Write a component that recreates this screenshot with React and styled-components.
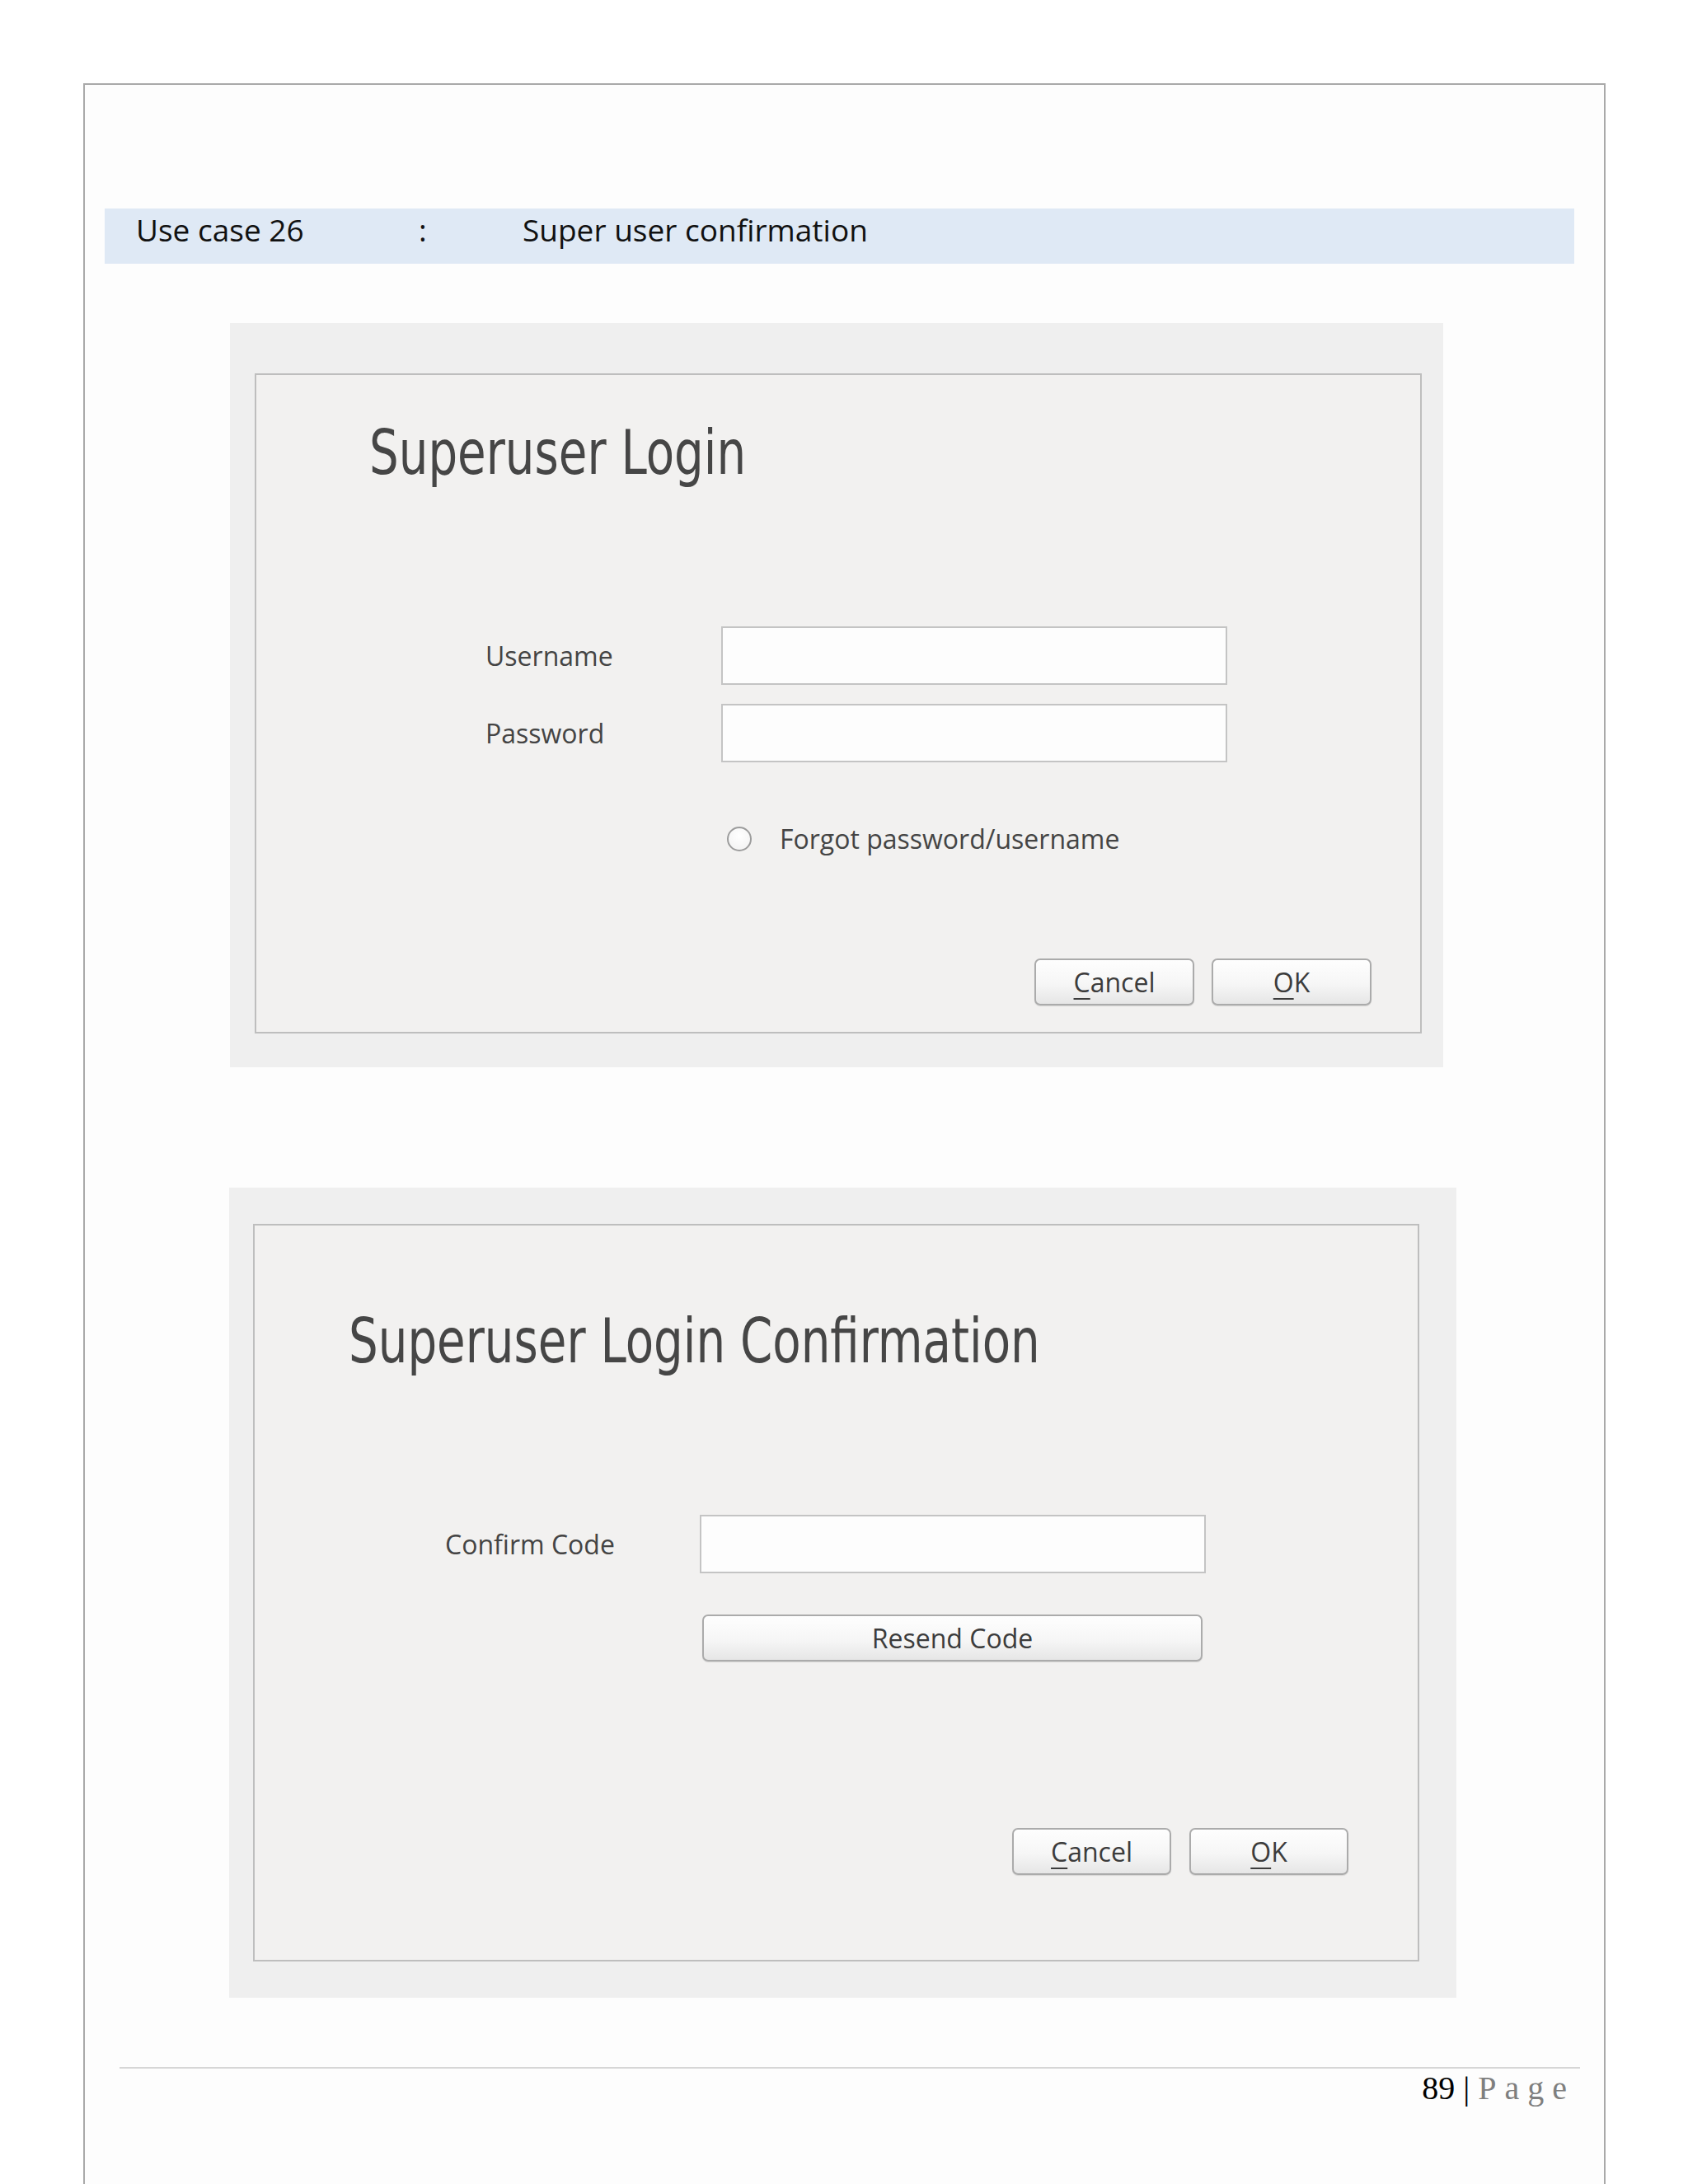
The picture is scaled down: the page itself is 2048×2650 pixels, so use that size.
import React from 'react';
import styled, { createGlobalStyle } from 'styled-components';

const GlobalStyle = createGlobalStyle`
  html, body {
    margin: 0;
    padding: 0;
    background: #fff;
  }
  body {
    height: 2650px;
    overflow: hidden;
  }
`;

const Page = styled.div`
  box-sizing: border-box;
  margin: 101px 0 0 101px;
  width: 1847px;
  height: 2549px;
  border: 2px solid #a9a9a9;
  border-bottom: none;
  background: #fdfdfd;
  display: flex;
  flex-direction: column;
`;

const CaseBand = styled.div`
  box-sizing: border-box;
  margin: 150px 0 0 24px;
  width: 1783px;
  height: 67px;
  padding-left: 38px;
  background: #dfe9f5;
  display: grid;
  grid-template-columns: 343px 126px 1fr;
  font-family: "Open Sans", "Noto Sans", sans-serif;
  font-size: 37px;
  line-height: 51px;
  color: #111;
`;

const Dialog = styled.section`
  box-sizing: border-box;
  margin: ${p => p.$top}px 0 0 ${p => p.$left}px;
  width: ${p => p.$w}px;
  height: ${p => p.$h}px;
  padding: ${p => p.$pad};
  background: #efefef;
`;

const Window = styled.div`
  box-sizing: border-box;
  height: 100%;
  border: 2px solid #bebebe;
  background: #f2f1f0;
  display: flex;
  flex-direction: column;
  align-items: flex-start;
  font-family: "Open Sans", "Noto Sans", sans-serif;
  color: #484848;
`;

/* the dialog face is a narrow Ubuntu-like cut; squeeze DejaVu Condensed to match */
const Title = styled.h1`
  margin: ${p => p.$top}px 0 0 ${p => p.$left}px;
  font-family: "DejaVu Sans Condensed", "DejaVu Sans", sans-serif;
  font-weight: 400;
  font-size: 74px;
  line-height: 73px;
  color: #464646;
  white-space: nowrap;
  transform: scaleX(0.845);
  transform-origin: left center;
`;

const Form = styled.div`
  margin: ${p => p.$top}px 0 0 ${p => p.$left}px;
  display: grid;
  grid-template-columns: ${p => p.$labelW}px 614px;
  row-gap: 23px;
  align-items: center;
`;

const Label = styled.label`
  font-size: 32px;
  line-height: 40px;
  color: #444;
`;

const Field = styled.div`
  box-sizing: border-box;
  height: 71px;
  border: 2px solid #c4c4c4;
  background: #fdfdfd;
`;

const RadioRow = styled.div`
  grid-column: 2;
  margin: 50px 0 0 7px;
  display: flex;
  align-items: center;
  gap: 34px;
  height: 40px;
  font-size: 32px;
  line-height: 40px;
  color: #444;
`;

const Radio = styled.span`
  box-sizing: border-box;
  width: 30px;
  height: 30px;
  border-radius: 50%;
  border: 2px solid #9c9c9c;
  background: radial-gradient(circle at 50% 35%, #ffffff 0%, #f1f1f1 100%);
`;

const Button = styled.button`
  box-sizing: border-box;
  width: ${p => p.$w}px;
  height: 57px;
  padding: 0;
  border: 2px solid #ababab;
  border-radius: 7px;
  background: linear-gradient(#fefefe 0%, #f6f6f6 55%, #e6e6e6 100%);
  box-shadow: 0 1px 1px rgba(0, 0, 0, 0.12);
  font-family: "Open Sans", "Noto Sans", sans-serif;
  font-size: 32px;
  line-height: 53px;
  color: #3c3c3c;
  text-align: center;
  u {
    text-decoration-thickness: 2px;
    text-underline-offset: 7px;
  }
`;

const ResendButton = styled(Button)`
  grid-column: 2;
  margin: 27px 0 0 3px;
`;

const Actions = styled.div`
  align-self: stretch;
  margin-top: auto;
  display: flex;
  justify-content: flex-end;
  gap: ${p => p.$gap}px;
  padding: 0 ${p => p.$right}px ${p => p.$bottom}px 0;
`;

const Rule = styled.div`
  margin: 84px 0 0 42px;
  width: 1772px;
  height: 2px;
  background: #d6d6d6;
`;

const PageNumber = styled.div`
  box-sizing: border-box;
  margin: 4px 0 0 42px;
  width: 1772px;
  padding-right: 6px;
  text-align: right;
  font-family: "Liberation Serif", "Times New Roman", serif;
  font-size: 40px;
  line-height: 1;
  color: #000;
  span {
    color: #7f7f7f;
    letter-spacing: 10px;
  }
`;

const DialogButtons = ({ gap, right, bottom, width }) => (
  <Actions $gap={gap} $right={right} $bottom={bottom}>
    <Button $w={width}><u>C</u>ancel</Button>
    <Button $w={width}><u>O</u>K</Button>
  </Actions>
);

export default function App() {
  return (
    <>
      <GlobalStyle />
      <Page>
        <CaseBand>
          <div>Use case 26</div>
          <div>:</div>
          <div>Super user confirmation</div>
        </CaseBand>

        <Dialog $top={72} $left={176} $w={1472} $h={903} $pad="61px 26px 41px 30px">
          <Window>
            <Title $top={58} $left={137}>Superuser Login</Title>
            <Form $top={174} $left={278} $labelW={286}>
              <Label>Username</Label>
              <Field />
              <Label>Password</Label>
              <Field />
              <RadioRow>
                <Radio />
                Forgot password/username
              </RadioRow>
            </Form>
            <DialogButtons gap={21} right={59} bottom={32} width={194} />
          </Window>
        </Dialog>

        <Dialog $top={146} $left={175} $w={1489} $h={983} $pad="44px 45px 44px 29px">
          <Window>
            <Title $top={104} $left={114}>Superuser Login Confirmation</Title>
            <Form $top={174} $left={231} $labelW={309}>
              <Label>Confirm Code</Label>
              <Field />
              <ResendButton $w={607}>Resend Code</ResendButton>
            </Form>
            <DialogButtons gap={22} right={84} bottom={103} width={193} />
          </Window>
        </Dialog>

        <Rule />
        <PageNumber>89 | <span>Page</span></PageNumber>
      </Page>
    </>
  );
}
